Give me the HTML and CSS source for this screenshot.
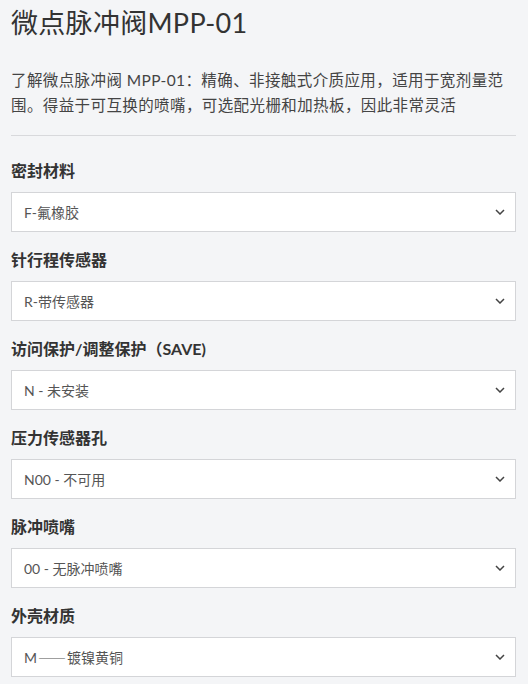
FILE: index.html
```html
<!DOCTYPE html>
<html lang="zh-CN">
<head>
<meta charset="utf-8">
<link rel="stylesheet" href="styles.css">
</head>
<body>
<main class="page">
  <h1 class="title">微点脉冲阀MPP-01</h1>
  <p class="intro">了解微点脉冲阀 MPP-01：精确、非接触式介质应用，适用于宽剂量范围。得益于可互换的喷嘴，可选配光栅和加热板，因此非常灵活</p>
  <hr class="divider">
  <div class="field">
    <div class="label">密封材料</div>
    <div class="select"><span>F-氟橡胶</span><svg class="chev" viewBox="0 0 10 6" width="10" height="6"><path d="M1 1l4 4 4-4" fill="none" stroke="#444" stroke-width="1.5"/></svg></div>
  </div>
  <div class="field">
    <div class="label">针行程传感器</div>
    <div class="select"><span>R-带传感器</span><svg class="chev" viewBox="0 0 10 6" width="10" height="6"><path d="M1 1l4 4 4-4" fill="none" stroke="#444" stroke-width="1.5"/></svg></div>
  </div>
  <div class="field">
    <div class="label">访问保护/调整保护（SAVE)</div>
    <div class="select"><span>N - 未安装</span><svg class="chev" viewBox="0 0 10 6" width="10" height="6"><path d="M1 1l4 4 4-4" fill="none" stroke="#444" stroke-width="1.5"/></svg></div>
  </div>
  <div class="field">
    <div class="label">压力传感器孔</div>
    <div class="select"><span>N00 - 不可用</span><svg class="chev" viewBox="0 0 10 6" width="10" height="6"><path d="M1 1l4 4 4-4" fill="none" stroke="#444" stroke-width="1.5"/></svg></div>
  </div>
  <div class="field">
    <div class="label">脉冲喷嘴</div>
    <div class="select"><span>00 - 无脉冲喷嘴</span><svg class="chev" viewBox="0 0 10 6" width="10" height="6"><path d="M1 1l4 4 4-4" fill="none" stroke="#444" stroke-width="1.5"/></svg></div>
  </div>
  <div class="field">
    <div class="label">外壳材质</div>
    <div class="select"><span>M<span class="dash">——</span>镀镍黄铜</span><svg class="chev" viewBox="0 0 10 6" width="10" height="6"><path d="M1 1l4 4 4-4" fill="none" stroke="#444" stroke-width="1.5"/></svg></div>
  </div>
</main>
</body>
</html>
```
FILE: styles.css
```css
html, body {
  margin: 0;
  padding: 0;
  background: #f4f5f7;
}
body {
  font-family: Lato, "Noto Sans CJK SC", sans-serif;
  color: #333;
}
.page {
  padding: 7px 12px 0 11px;
}
.title {
  margin: 0;
  font-size: 27px;
  line-height: 31px;
  font-weight: 400;
  letter-spacing: 0.3px;
  color: #333;
}
.intro {
  max-width: 495px;
  margin: 30px 0 0;
  font-size: 15.5px;
  letter-spacing: 0.4px;
  line-height: 25px;
  color: #444;
}
.divider {
  margin: 17px 0 0;
  border: 0;
  border-top: 1px solid #d8d9dc;
  height: 0;
}
.field {
  display: flex;
  flex-direction: column;
  gap: 9px;
  margin-top: 23px;
}
.field + .field {
  margin-top: 16px;
}
.label {
  font-size: 16px;
  line-height: 24px;
  font-weight: 700;
  color: #333;
}
.select {
  box-sizing: border-box;
  height: 40px;
  background: #fff;
  border: 1px solid #d4d5d8;
  display: flex;
  align-items: center;
  justify-content: space-between;
  padding: 0 10px 0 12px;
  font-size: 14px;
  color: #555;
}
.dash {
  font-family: "Noto Sans CJK SC", sans-serif;
  letter-spacing: 1px;
  margin-left: 1px;
}
.chev {
  display: block;
}
```
